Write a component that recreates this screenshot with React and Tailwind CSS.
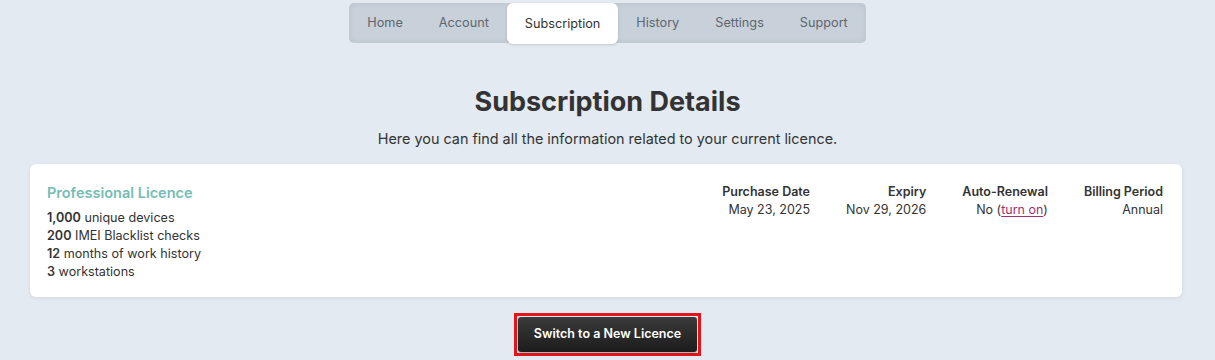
export default function App() {
  const tabs = ["Home", "Account", "Subscription", "History", "Settings", "Support"];
  return (
    <div className="min-h-[360px] bg-[#e3eaf2] text-[#333] flex flex-col items-center" style={{ fontFamily: "Inter, 'Noto Sans', sans-serif" }}>
      <nav className="mt-[3px] flex h-[40px] items-stretch rounded-[5px] bg-[#c8d0d9] shadow-[inset_0_0_6px_rgba(0,0,0,0.08)]">
        {tabs.map((t) => (
          <div
            key={t}
            className={
              t === "Subscription"
                ? "flex items-center rounded-[6px] bg-white px-[18px] text-[12.7px] text-[#333] shadow-[0_1px_3px_rgba(0,0,0,0.15)] h-[41px]"
                : "flex items-center px-[18px] text-[12.7px] text-[#5f6670]"
            }
          >
            {t}
          </div>
        ))}
      </nav>
      <h1 className="mt-[41px] text-[27px] font-bold leading-[36px] text-[#333]">Subscription Details</h1>
      <p className="mt-[9px] text-[14.4px] leading-[20px] text-[#333]">Here you can find all the information related to your current licence.</p>
      <div className="mt-[15px] self-stretch pl-[30px] pr-[33px]">
        <div className="flex justify-between rounded-[6px] bg-white pl-[17px] pr-[19px] pt-[19px] pb-[18px] shadow-[0_1px_4px_rgba(0,0,0,0.08)] h-[133px]">
          <div>
            <div className="text-[14.5px] font-semibold leading-[19px] text-[#74bdb4]">Professional Licence</div>
            <div className="mt-[7px] text-[12.6px] leading-[18px] text-[#333]">
              <div><span className="font-semibold">1,000</span> unique devices</div>
              <div><span className="font-semibold">200</span> IMEI Blacklist checks</div>
              <div><span className="font-semibold">12</span> months of work history</div>
              <div><span className="font-semibold">3</span> workstations</div>
            </div>
          </div>
          <div className="flex gap-[36px] text-right text-[12.5px] leading-[18px]">
            <div>
              <div className="font-semibold">Purchase Date</div>
              <div>May 23, 2025</div>
            </div>
            <div>
              <div className="font-semibold">Expiry</div>
              <div>Nov 29, 2026</div>
            </div>
            <div>
              <div className="font-semibold">Auto-Renewal</div>
              <div>No (<span className="text-[#a3306e] underline underline-offset-2">turn on</span>)</div>
            </div>
            <div>
              <div className="font-semibold">Billing Period</div>
              <div>Annual</div>
            </div>
          </div>
        </div>
      </div>
      <div className="mt-[16px] border-[3px] border-[#e3141b] p-[1px]">
        <button className="h-[35px] rounded-[3px] bg-gradient-to-b from-[#3b3b3b] to-[#1c1c1c] px-[16px] text-[12.5px] font-semibold text-white shadow-[0_1px_2px_rgba(0,0,0,0.3)]">
          Switch to a New Licence
        </button>
      </div>
    </div>
  );
}
